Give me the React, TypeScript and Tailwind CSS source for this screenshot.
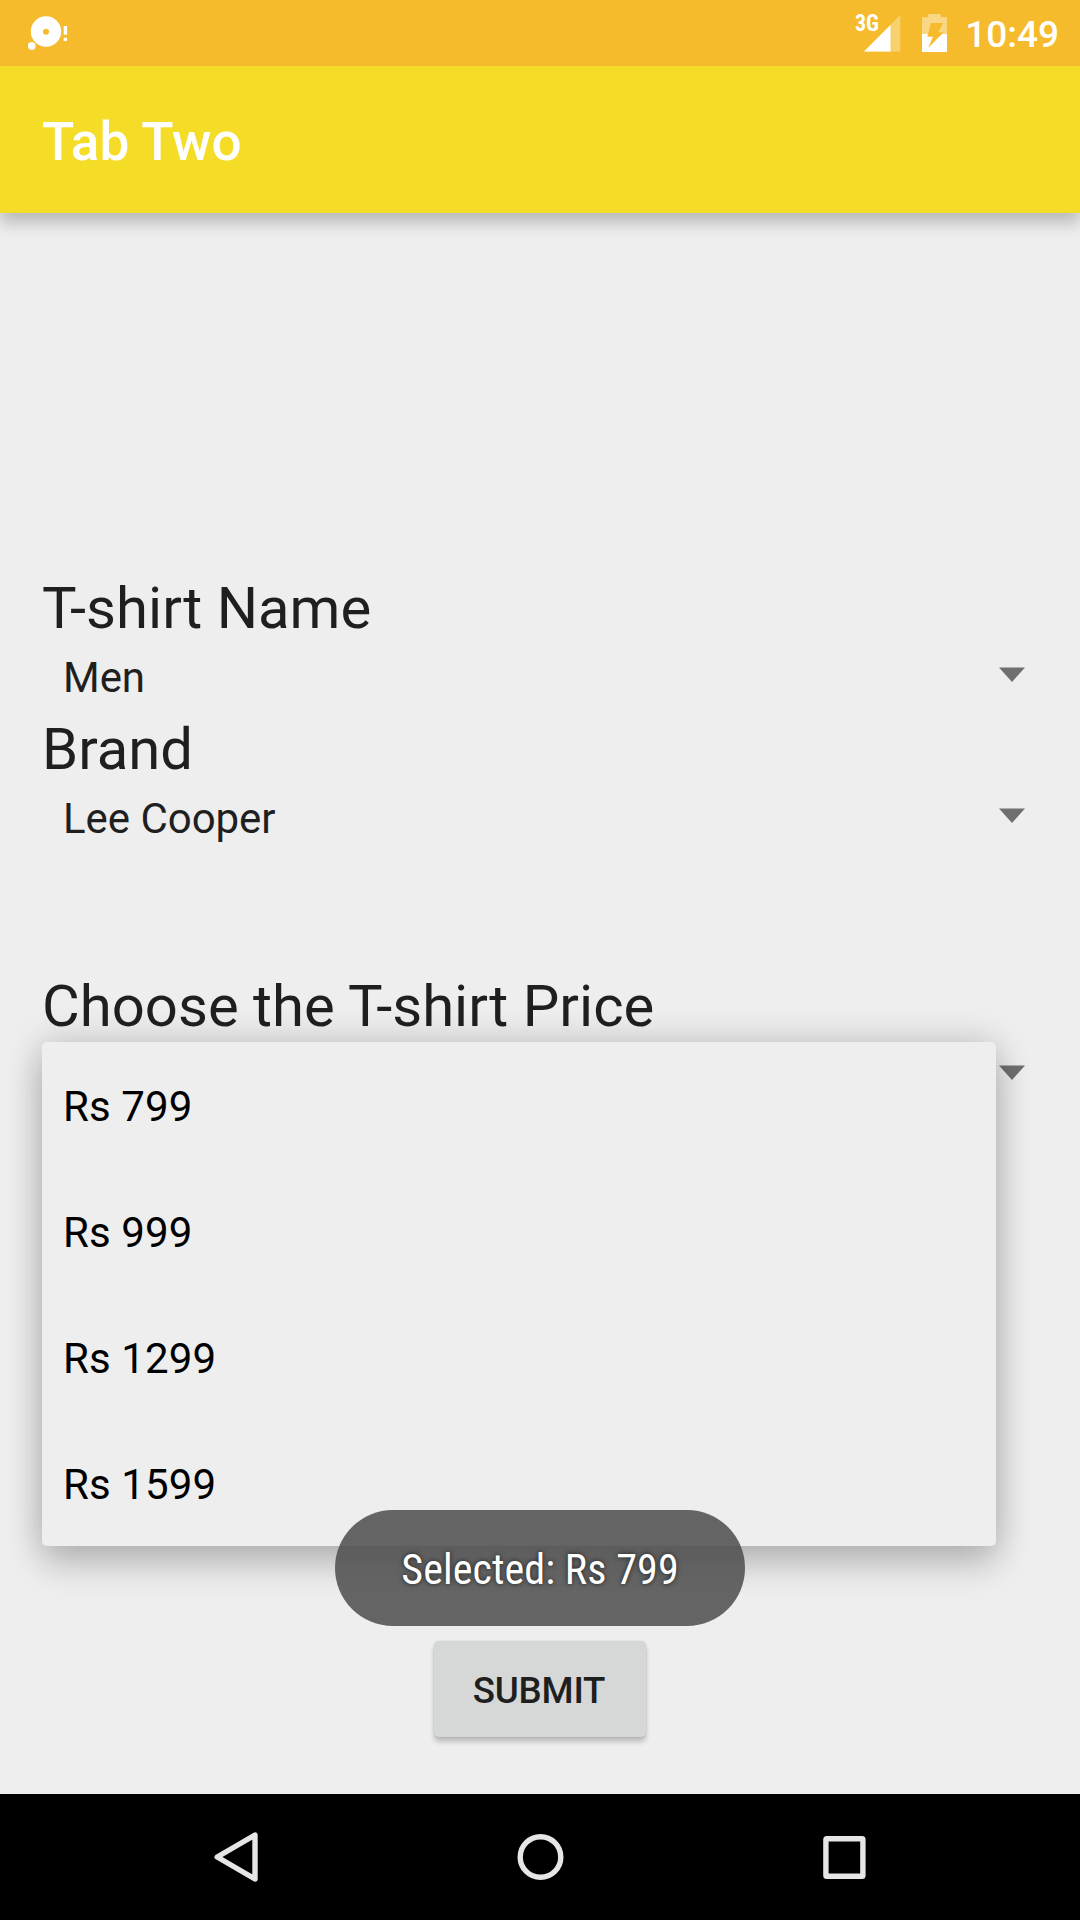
import React from 'react';

const prices = ['Rs 799', 'Rs 999', 'Rs 1299', 'Rs 1599'];

function StatusBar() {
  return (
    <div className="flex h-[66px] items-start justify-between bg-[#f5bb2c] pl-[28px] pr-[21px]">
      <svg className="mt-[16px]" width="40" height="36" viewBox="0 0 40 36" fill="white">
        <path fillRule="evenodd" d="M18 0.3a15.2 15.2 0 1 1 0 30.4a15.2 15.2 0 0 1 0-30.4zm0 12.4a3 3 0 1 0 0 6a3 3 0 0 0 0-6z" />
        <circle cx="3.6" cy="30" r="5" fill="#f5bb2c" />
        <circle cx="3.6" cy="30" r="3.9" />
        <path d="M35.7 10h3.4v8.7h-3.4zM35.7 21.7h3.4V25h-3.4z" />
      </svg>
      <div className="flex items-start">
        <div className="flex">
          <svg className="mt-[4px]" width="50" height="48" viewBox="-4 -10 50 48">
            <path d="M9 37.5L45.3 1v36.5z" fill="white" fillOpacity="0.32" />
            <path d="M9 37.5L35.5 11v26.5z" fill="white" />
            <text
              className="font-['Roboto_Condensed',Roboto,sans-serif]"
              x="0"
              y="17.3"
              fill="white"
              fontSize="23"
              fontWeight="700"
              textLength="24"
              lengthAdjust="spacingAndGlyphs"
            >
              3G
            </text>
          </svg>
          <svg className="ml-[21px] mt-[14px]" width="25" height="38" viewBox="0 0 25 38">
            <path d="M0 3.2h6.3V0h12.4v3.2H25V20H0z" fill="white" fillOpacity="0.42" />
            <path d="M0 20h25v18H0z" fill="white" />
            <path d="M9 9h12.2l-4.9 9.2h5.4L6.3 33.8L11 22.8H5.3z" fill="#f5bb2c" />
          </svg>
        </div>
        <span className="ml-[18px] text-[37px] font-medium leading-[69px]">10:49</span>
      </div>
    </div>
  );
}

function Field({ label, value, className = '' }: { label: string; value?: string; className?: string }) {
  return (
    <div className={`h-[141px] pl-[42px] pr-[55px] text-[#1f1f1f] ${className}`}>
      <div className="h-[76px] whitespace-nowrap text-[58px] leading-[78px] tracking-[0.02px]">{label}</div>
      <div className="flex h-[60px] items-start justify-between pl-[21px]">
        <span className="text-[42px] leading-[66px] tracking-[-0.04px]">{value}</span>
        <svg className="mt-[22px]" width="26" height="15" viewBox="0 0 26 15" fill="#6f6f6f">
          <path d="M0 0.5h26L13 15z" />
        </svg>
      </div>
    </div>
  );
}

export default function App() {
  return (
    <div className="relative flex h-[1920px] w-[1080px] flex-col overflow-hidden bg-[#eeeeee] font-[Roboto,sans-serif]">
      <header className="h-[213px] shrink-0 bg-[#f5dc26] text-white shadow-[0_10px_15px_rgba(0,0,0,0.22)]">
        <StatusBar />
        <h1 className="pl-[42px] text-[53px] font-medium leading-[153px]">Tab Two</h1>
      </header>
      <main className="flex flex-1 flex-col pt-[356px]">
        <Field label="T-shirt Name" value="Men" />
        <Field label="Brand" value="Lee Cooper" />
        <Field label="Choose the T-shirt Price" className="mt-[116px]" />
        <button className="mb-[57px] mt-auto h-[96px] w-[212px] self-center rounded-[5px] bg-[#d6d8d7] pr-[2px] text-[36.7px] font-medium leading-[100px] tracking-[-0.2px] text-[#1f1f1f] shadow-[0_5px_5px_rgba(0,0,0,0.2),0_0_2px_rgba(0,0,0,0.15)]">
          SUBMIT
        </button>
      </main>
      <nav className="flex h-[126px] shrink-0 items-center bg-black pl-[214px]">
        <svg width="652" height="60" viewBox="214 1827 652 60" fill="none" stroke="#e6e6e6" strokeWidth="5.4" strokeLinejoin="round">
          <path d="M217.2 1857L255 1835v44z" />
          <circle cx="540.5" cy="1857" r="20.3" />
          <rect x="825.9" y="1838.7" width="37" height="37.5" rx="0.8" />
        </svg>
      </nav>
      <ul className="absolute left-[42px] top-[1042px] w-[954px] rounded-[5px] bg-[#eeeeee] pl-[21px] text-[42px] leading-[129px] tracking-[0.12px] text-black shadow-[0_20px_34px_rgba(0,0,0,0.17),0_0_36px_rgba(0,0,0,0.19)]">
        {prices.map((price) => (
          <li key={price} className="h-[126px]">{price}</li>
        ))}
      </ul>
      <div className="absolute left-[335px] top-[1510px] flex h-[116px] w-[410px] items-center justify-center rounded-full bg-[#4f4f4f]/87">
        <span className="whitespace-nowrap pt-[3px] font-['Roboto_Condensed',Roboto,sans-serif] text-[42px] leading-[60px] tracking-[0.1px] text-white [font-stretch:75%] [text-shadow:0_0_5px_rgba(0,0,0,0.7)]">
          Selected: Rs 799
        </span>
      </div>
    </div>
  );
}
